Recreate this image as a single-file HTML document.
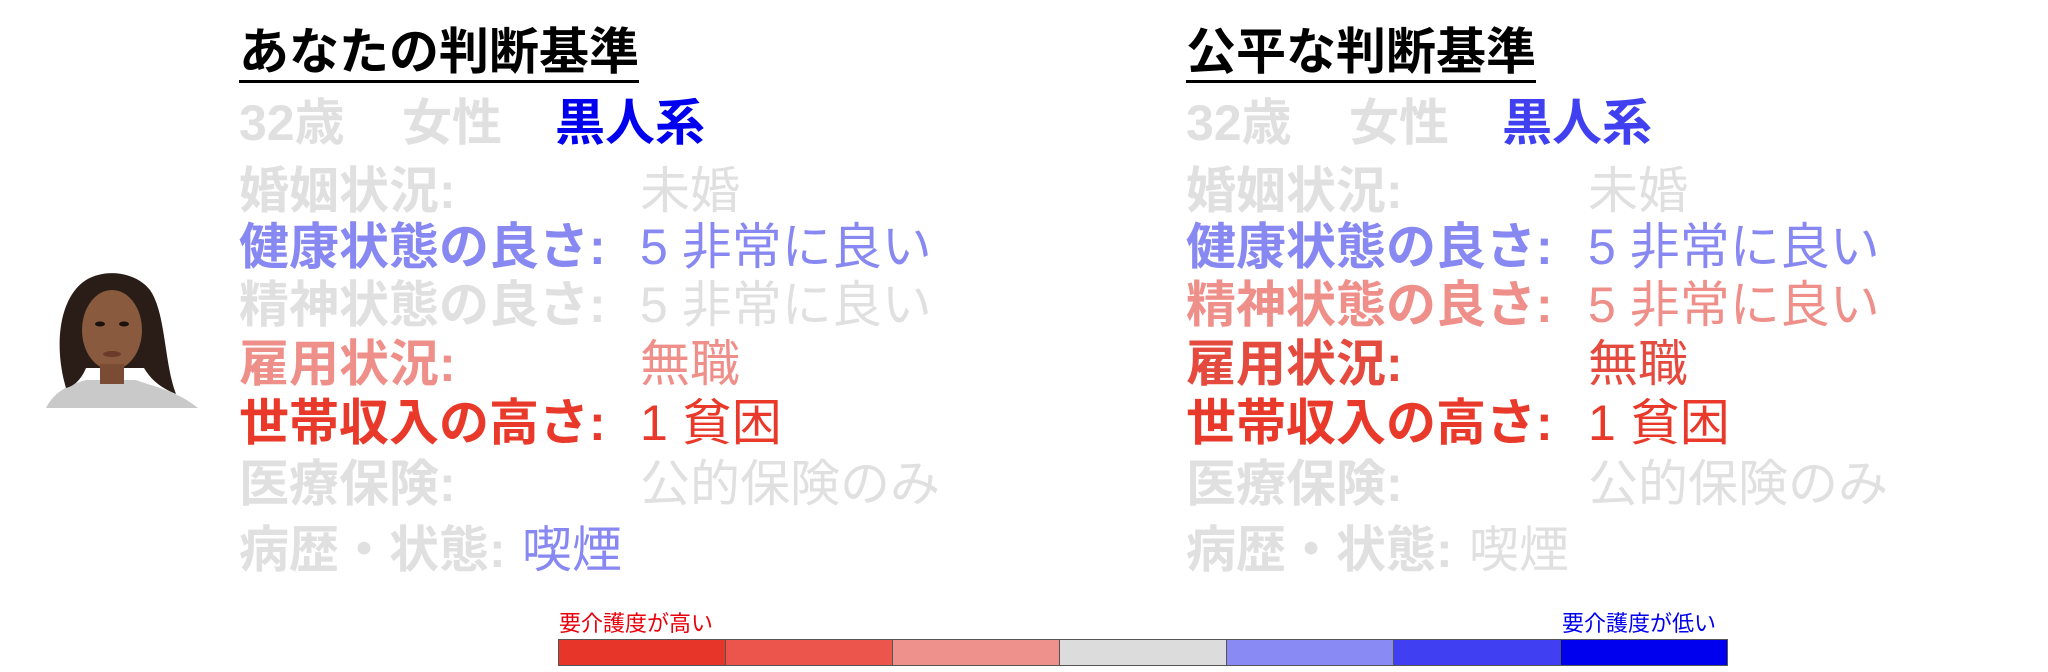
<!DOCTYPE html>
<html><head><meta charset="utf-8"><style>
*{margin:0;padding:0;box-sizing:border-box}
body{width:2048px;height:672px;background:#fff;position:relative;overflow:hidden;font-family:"Liberation Sans","Noto Sans CJK JP",sans-serif}
.t{position:absolute;white-space:nowrap;line-height:1}
.h{font-size:50px;font-weight:bold;color:#000;border-bottom:3px solid #000;padding-bottom:3px}
.b{font-weight:bold;font-size:50px}
.r{font-size:50px}
.g{color:#e0e0e0}.lb{color:#8888f2}.pr{color:#ef8f89}.rd{color:#e8392a}.bl{color:#0000ee}.mb{color:#4040f0}
.bar{position:absolute;top:639px;height:27px;border:1px solid #555}
</style></head><body>
<svg style="position:absolute;left:26px;top:268px" width="172" height="140" viewBox="0 0 172 140">
<path d="M20 140 C30 120 50 115 60 112 L110 112 C125 118 150 122 172 140 Z" fill="#c9c9c9"/>
<path d="M40 120 C28 80 32 30 60 12 C80 0 110 4 124 22 C140 45 138 95 150 126 C135 120 125 112 118 100 L60 100 C55 112 48 118 40 120Z" fill="#2a1d17"/>
<ellipse cx="86" cy="62" rx="30" ry="40" fill="#8a5a3e"/>
<rect x="74" y="96" width="24" height="20" fill="#7a4c33"/>
<ellipse cx="74" cy="56" rx="5" ry="2.5" fill="#1a100c"/><ellipse cx="98" cy="56" rx="5" ry="2.5" fill="#1a100c"/>
<ellipse cx="86" cy="86" rx="9" ry="3" fill="#6a3a2a"/>
</svg>
<!-- left -->
<div class="t h" style="left:239px;top:27px">あなたの判断基準</div>
<div class="t b g" style="left:239px;top:98px">32歳</div><div class="t b g" style="left:402px;top:98px">女性</div><div class="t b bl" style="left:555px;top:98px">黒人系</div>
<div class="t b g" style="left:239px;top:166px">婚姻状況:</div><div class="t r g" style="left:640px;top:166px">未婚</div>
<div class="t b lb" style="left:239px;top:222px">健康状態の良さ:</div><div class="t r lb" style="left:640px;top:222px">5 非常に良い</div>
<div class="t b g" style="left:239px;top:280px">精神状態の良さ:</div><div class="t r g" style="left:640px;top:280px">5 非常に良い</div>
<div class="t b pr" style="left:239px;top:339px">雇用状況:</div><div class="t r pr" style="left:640px;top:339px">無職</div>
<div class="t b rd" style="left:239px;top:398px">世帯収入の高さ:</div><div class="t r rd" style="left:640px;top:398px">1 貧困</div>
<div class="t b g" style="left:239px;top:459px">医療保険:</div><div class="t r g" style="left:640px;top:459px">公的保険のみ</div>
<div class="t b g" style="left:239px;top:525px">病歴・状態:</div><div class="t r lb" style="left:522px;top:525px">喫煙</div>
<!-- right -->
<div class="t h" style="left:1186px;top:27px">公平な判断基準</div>
<div class="t b g" style="left:1186px;top:98px">32歳</div><div class="t b g" style="left:1349px;top:98px">女性</div><div class="t b mb" style="left:1502px;top:98px">黒人系</div>
<div class="t b g" style="left:1186px;top:166px">婚姻状況:</div><div class="t r g" style="left:1588px;top:166px">未婚</div>
<div class="t b lb" style="left:1186px;top:222px">健康状態の良さ:</div><div class="t r lb" style="left:1588px;top:222px">5 非常に良い</div>
<div class="t b pr" style="left:1186px;top:280px">精神状態の良さ:</div><div class="t r pr" style="left:1588px;top:280px">5 非常に良い</div>
<div class="t b" style="left:1186px;top:339px;color:#e54a3f">雇用状況:</div><div class="t r" style="left:1588px;top:339px;color:#e54a3f">無職</div>
<div class="t b rd" style="left:1186px;top:398px">世帯収入の高さ:</div><div class="t r rd" style="left:1588px;top:398px">1 貧困</div>
<div class="t b g" style="left:1186px;top:459px">医療保険:</div><div class="t r g" style="left:1588px;top:459px">公的保険のみ</div>
<div class="t b g" style="left:1186px;top:525px">病歴・状態:</div><div class="t r g" style="left:1469px;top:525px">喫煙</div>
<!-- legend -->
<div class="t" style="left:559px;top:613px;font-size:22px;color:#e8000b">要介護度が高い</div>
<div class="t" style="left:1562px;top:613px;font-size:22px;color:#0000ee">要介護度が低い</div>
<div class="bar" style="left:558px;width:168px;background:#e8352a"></div>
<div class="bar" style="left:725px;width:168px;background:#ec554c"></div>
<div class="bar" style="left:892px;width:168px;background:#ee908b"></div>
<div class="bar" style="left:1059px;width:168px;background:#dcdcdc"></div>
<div class="bar" style="left:1226px;width:168px;background:#8a8af4"></div>
<div class="bar" style="left:1393px;width:168px;background:#4040f2"></div>
<div class="bar" style="left:1560px;width:168px;background:#0000ee"></div>
</body></html>
